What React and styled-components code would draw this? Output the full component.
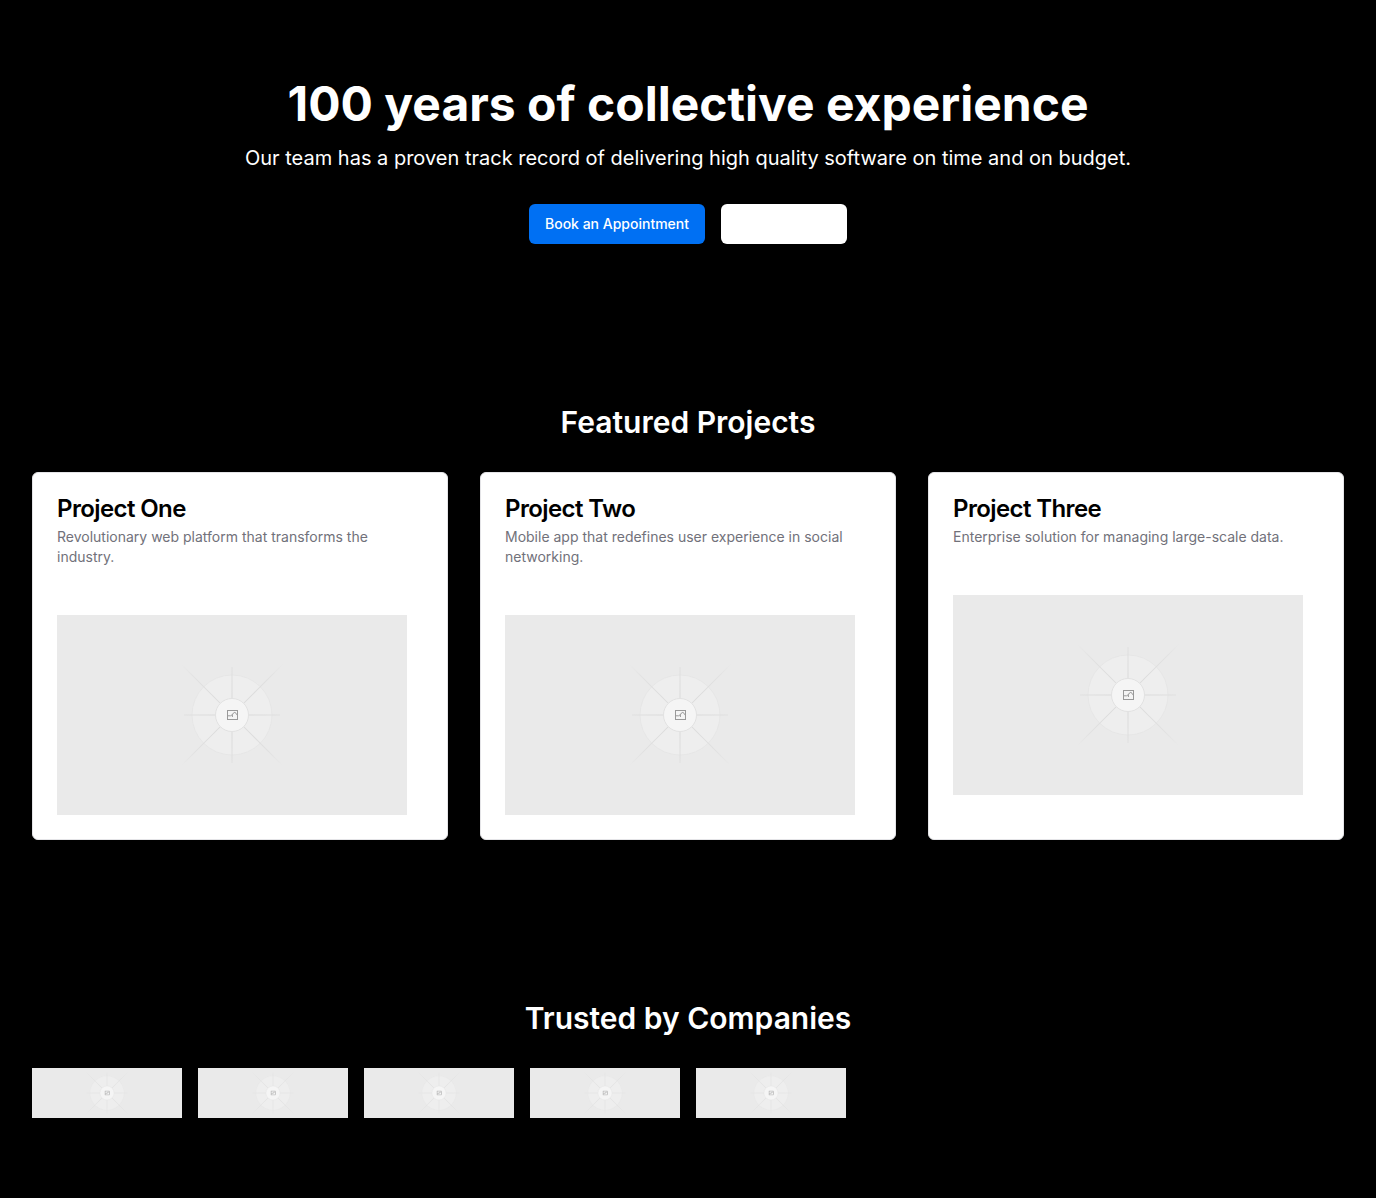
import React from "react";
import styled, { createGlobalStyle } from "styled-components";

const GlobalStyle = createGlobalStyle`
  *, *::before, *::after { box-sizing: border-box; }
  body {
    margin: 0;
    background: #000;
    color: #fff;
    font-family: Inter, "Liberation Sans", sans-serif;
    font-size: 16px;
    line-height: 24px;
  }
  h1, h2, h3, p, ul { margin: 0; padding: 0; }
`;

const Section = styled.section`
  padding: 80px 32px;
`;

const Hero = styled(Section)`
  text-align: center;
`;

const HeroTitle = styled.h1`
  font-size: 48px;
  line-height: 48px;
  font-weight: 700;
`;

const HeroText = styled.p`
  margin-top: 16px;
  font-size: 20px;
  line-height: 28px;
`;

const Actions = styled.div`
  display: flex;
  justify-content: center;
  gap: 16px;
  margin-top: 32px;
`;

const Button = styled.button`
  height: 40px;
  min-width: 126px;
  padding: 8px 16px;
  border: 0;
  border-radius: 6px;
  background: ${(p) => (p.$primary ? "#0070f3" : "#fff")};
  color: #fff;
  font-family: inherit;
  font-size: 14px;
  line-height: 20px;
  font-weight: 500;
  cursor: pointer;
`;

const SectionTitle = styled.h2`
  margin-bottom: 32px;
  text-align: center;
  font-size: 30px;
  line-height: 36px;
  font-weight: 600;
`;

const ProjectGrid = styled.div`
  display: grid;
  grid-template-columns: repeat(3, minmax(0, 1fr));
  gap: 32px;
`;

const Card = styled.article`
  border: 1px solid #e4e4e7;
  border-radius: 6px;
  background: #fff;
  color: #000;
`;

const CardHeader = styled.header`
  display: flex;
  flex-direction: column;
  gap: 6px;
  padding: 24px;
`;

const CardTitle = styled.h3`
  font-size: 24px;
  line-height: 24px;
  font-weight: 600;
  letter-spacing: -0.025em;
`;

const CardText = styled.p`
  color: #71717a;
  font-size: 14px;
  line-height: 20px;
`;

const CardBody = styled.div`
  padding: 24px;
`;

const LogoList = styled.ul`
  display: flex;
  flex-wrap: wrap;
  gap: 16px;
  list-style: none;
`;

const Picture = styled.svg`
  display: block;
  max-width: 100%;
`;

const DIAGONALS = [45, 135, 225, 315];
const AXES = [0, 90, 180, 270];

function Placeholder({ width, height, label }) {
  return (
    <Picture
      width={width}
      height={height}
      viewBox="0 0 350 350"
      preserveAspectRatio="xMidYMid slice"
      role="img"
      aria-label={label}
    >
      <defs>
        <linearGradient id="ray" gradientUnits="userSpaceOnUse" x1="17" y1="0" x2="72" y2="0">
          <stop offset="0" stopColor="#dadada" />
          <stop offset="0.6" stopColor="#e0e0e0" />
          <stop offset="1" stopColor="#eaeaea" />
        </linearGradient>
      </defs>
      <rect width="350" height="350" fill="#eaeaea" />
      <g transform="translate(175 175)">
        <circle r="40" fill="#eeeeee" stroke="#e4e4e4" strokeWidth="0.8" />
        {AXES.map((angle) => (
          <path key={angle} d="M17-.5H48V.5H17Z" fill="url(#ray)" transform={`rotate(${angle})`} />
        ))}
        {DIAGONALS.map((angle) => (
          <path key={angle} d="M17-.5H72V.5H17Z" fill="url(#ray)" transform={`rotate(${angle})`} />
        ))}
        <circle r="16.5" fill="#f5f5f5" stroke="#dddddd" strokeWidth="0.8" />
        <g fill="none" stroke="#999" strokeWidth="1">
          <rect x="-4.5" y="-4.5" width="10" height="9" />
          <path d="M-4.5 .8H-1.5L.4-.4M.4 2V-.2Q1.2-2.6 2.8-2.6Q4-2.4 5.5 .6" />
        </g>
      </g>
    </Picture>
  );
}

const PROJECTS = [
  { title: "Project One", text: "Revolutionary web platform that transforms the industry." },
  { title: "Project Two", text: "Mobile app that redefines user experience in social networking." },
  { title: "Project Three", text: "Enterprise solution for managing large-scale data." },
];

const COMPANIES = [1, 2, 3, 4, 5];

export default function App() {
  return (
    <>
      <GlobalStyle />
      <main>
        <Hero>
          <HeroTitle>100 years of collective experience</HeroTitle>
          <HeroText>
            Our team has a proven track record of delivering high quality software on time and on budget.
          </HeroText>
          <Actions>
            <Button type="button" $primary>Book an Appointment</Button>
            <Button type="button" aria-label="View projects" />
          </Actions>
        </Hero>
        <Section>
          <SectionTitle>Featured Projects</SectionTitle>
          <ProjectGrid>
            {PROJECTS.map(({ title, text }) => (
              <Card key={title}>
                <CardHeader>
                  <CardTitle>{title}</CardTitle>
                  <CardText>{text}</CardText>
                </CardHeader>
                <CardBody>
                  <Placeholder width={350} height={200} label={title} />
                </CardBody>
              </Card>
            ))}
          </ProjectGrid>
        </Section>
        <Section>
          <SectionTitle>Trusted by Companies</SectionTitle>
          <LogoList>
            {COMPANIES.map((n) => (
              <li key={n}>
                <Placeholder width={150} height={50} label={`Company ${n}`} />
              </li>
            ))}
          </LogoList>
        </Section>
      </main>
    </>
  );
}
